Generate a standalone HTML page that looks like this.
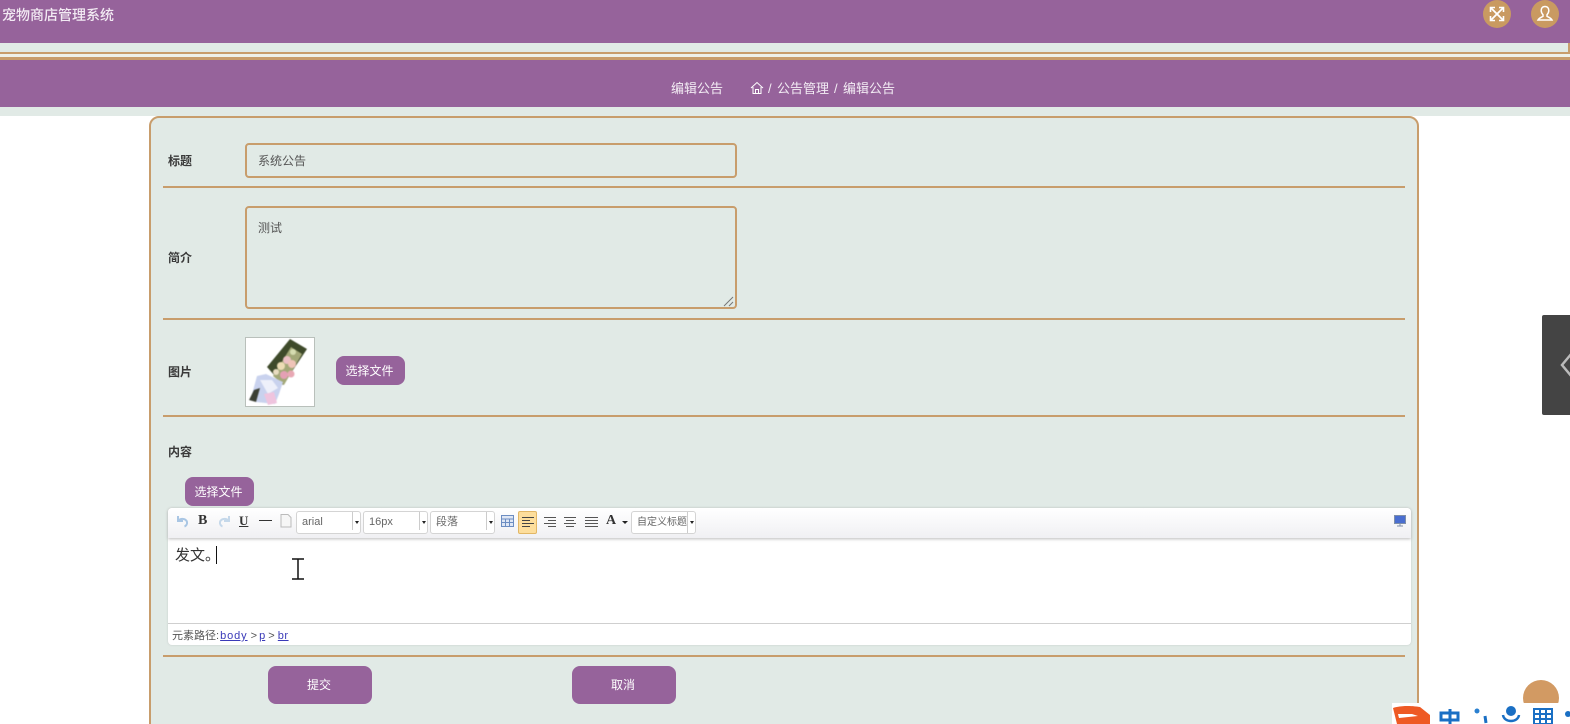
<!DOCTYPE html>
<html lang="zh-CN"><head><meta charset="utf-8"><title>宠物商店管理系统</title>
<style>
html,body{margin:0;padding:0;width:1570px;height:724px;overflow:hidden;background:#fff}
body{position:relative;font-family:"Liberation Sans","Noto Sans CJK SC",sans-serif;font-size:12px;color:#333}
.a{position:absolute;box-sizing:border-box;white-space:nowrap}
.p{background:#96639b}
.l{background:#c89d6c}
.lab{font-weight:bold;color:#3a3a3a;font-size:12px;line-height:16px;left:168px}
.in{border:2px solid #c89d6c;border-radius:4px;color:#555;font-size:12px;left:245px;width:492px}
.btn{background:#96639b;color:#fff;text-align:center;border-radius:8px}
.sel{background:#fff;border:1px solid #d4d4d4;border-radius:3px;height:23px;top:511px;font-size:11px;line-height:21px;color:#666;padding-left:5px;overflow:hidden}
.sel i{position:absolute;right:7px;top:0;bottom:3px;border-left:1px solid #ccc}
.sel b{position:absolute;right:1px;top:9px;border:2.500px solid transparent;border-top:3px solid #222;border-bottom:0}
.bc{top:80px;color:#f3ecf4;font-size:13px;line-height:18px}
svg{position:absolute;overflow:visible}
</style></head><body>
<div class="a p" style="left:0;top:0;width:1570px;height:43px"></div>
<div class="a" style="left:0;top:43px;width:1570px;height:9px;background:#e1eae6;border-right:2px solid #c89d6c"></div>
<div class="a l" style="left:0;top:52px;width:1570px;height:2px"></div>
<div class="a" style="left:0;top:54px;width:1570px;height:3px;background:#eef1ea"></div>
<div class="a l" style="left:0;top:57px;width:1570px;height:3px"></div>
<div class="a p" style="left:0;top:60px;width:1570px;height:47px"></div>
<div class="a" style="left:0;top:107px;width:1570px;height:9px;background:#e1eae6"></div>
<div class="a" style="left:2px;top:6px;color:#f2eaf3;font-size:14px;line-height:18px;font-weight:500">宠物商店管理系统</div>

<div class="a" style="left:1483px;top:0;width:28px;height:28px;border-radius:50%;background:#c99a61"></div>
<svg style="left:1483px;top:0" width="28" height="28" fill="none" stroke="#fff" stroke-width="1.800"><path d="M8 8L20 20M20 8L8 20"/><path d="M7.500 12V7.500H12M16 7.500H20.500V12M7.500 16V20.500H12M16 20.500H20.500V16" stroke-width="1.600"/></svg>
<div class="a" style="left:1531px;top:0;width:28px;height:28px;border-radius:50%;background:#c99a61"></div>
<svg style="left:1531px;top:0" width="28" height="28" fill="none" stroke="#fff" stroke-width="1.500"><path d="M14 6.500c-2.500 0-3.800 1.800-3.800 4 0 2 1 3.300 1.800 4.200v1.600c-1.500 1-3.800 1.500-5 3.700h14c-1.200-2.200-3.500-2.700-5-3.700v-1.600c.8-.9 1.800-2.200 1.800-4.200 0-2.200-1.300-4-3.800-4z"/></svg>

<div class="a bc" style="left:671px">编辑公告</div>
<svg style="left:750px;top:81px" width="14" height="14" fill="none" stroke="#fff" stroke-width="1"><path d="M1 7L7 1.500 13 7M3 6V12.500H11V6M5.500 12.500V8.500H8.500V12.500"/></svg>
<div class="a bc" style="left:768px">/</div>
<div class="a bc" style="left:777px">公告管理</div>
<div class="a bc" style="left:834px">/</div>
<div class="a bc" style="left:843px">编辑公告</div>

<div class="a" style="left:149px;top:116px;width:1270px;height:640px;background:#e1eae6;border:2px solid #c89d6c;border-radius:10px"></div>

<div class="a lab" style="top:153px">标题</div>
<div class="a in" style="top:143px;height:35px;line-height:32px;padding-left:11px">系统公告</div>
<div class="a l" style="left:163px;top:186px;width:1242px;height:2px"></div>

<div class="a lab" style="top:250px">简介</div>
<div class="a in" style="top:206px;height:103px;line-height:18px;padding:11px 0 0 11px">测试</div>
<svg style="left:722px;top:295px" width="12" height="12" stroke="#777" stroke-width="1"><path d="M2 11L11 2M7 11L11 7"/></svg>
<div class="a l" style="left:163px;top:318px;width:1242px;height:2px"></div>

<div class="a lab" style="top:364px">图片</div>
<div class="a" style="left:245px;top:337px;width:70px;height:70px;background:#fff;border:1px solid #b9c0bb;overflow:hidden">
<svg style="left:0;top:0;filter:blur(.5px)" width="68" height="68">
<path d="M21 29L44 1 61 11 37 47z" fill="#3e4a2a"/>
<path d="M27 38L45 9 56 16 38 47z" fill="#a3a878"/>
<circle cx="47" cy="14" r="3" fill="#d5dcb0"/><circle cx="41" cy="22" r="4" fill="#ecc0c4"/><circle cx="46" cy="26" r="4" fill="#efc4b8"/><circle cx="35" cy="28" r="4" fill="#ecdcb4"/><circle cx="38" cy="37" r="4" fill="#e4a0b4"/><circle cx="45" cy="36" r="3.500" fill="#e8a8b4"/><circle cx="30" cy="34" r="3" fill="#e8dcc0"/>
<path d="M11 38L20 36 37 44 33 56 29 66 10 64 5 60z" fill="#c9d2ee"/>
<path d="M14 42L26 42 32 50 22 56z" fill="#eef0fa"/>
<path d="M3 62L8 52 14 50 10 64z" fill="#3c4034"/>
<path d="M18 56L28 54 31 65 22 67z" fill="#efc4de"/>
</svg></div>
<div class="a btn" style="left:336px;top:356px;width:69px;height:29px;line-height:30px;font-size:12px;padding-right:2px">选择文件</div>
<div class="a l" style="left:163px;top:415px;width:1242px;height:2px"></div>

<div class="a lab" style="top:444px">内容</div>
<div class="a btn" style="left:185px;top:477px;width:69px;height:29px;line-height:30px;font-size:12px;padding-right:2px">选择文件</div>

<div class="a" style="left:168px;top:508px;width:1243px;height:137px;background:#fff;border-radius:4px;box-shadow:0 0 2px #c4cbc8"></div>
<div class="a" style="left:168px;top:508px;width:1243px;height:30px;background:linear-gradient(#fff,#f0f0f3);border-radius:4px 4px 0 0;box-shadow:0 1px 3px #bbb"></div>

<svg style="left:175px;top:514px" width="14" height="14" fill="none" stroke="#a9c6e4" stroke-width="2"><path d="M3 2V7H8M3.500 6.500C6 4 11 4.500 12 8 12.500 10 11 12 9.500 12.500"/></svg>
<div class="a" style="left:198px;top:513px;font:bold 14px/16px 'Liberation Serif',serif;color:#333">B</div>
<svg style="left:218px;top:514px" width="14" height="14" fill="none" stroke="#c5d8ea" stroke-width="2"><path d="M11 2V7H6M10.500 6.500C8 4 3 4.500 2 8 1.500 10 3 12 4.500 12.500"/></svg>
<div class="a" style="left:239px;top:513px;font:bold 13px/15px 'Liberation Serif',serif;color:#333;text-decoration:underline">U</div>
<div class="a" style="left:259px;top:520px;width:13px;height:1px;background:#333"></div>
<svg style="left:280px;top:514px" width="12" height="14" fill="#f6f6f6" stroke="#bbb"><path d="M1 .500H8L11 3.500V13H1z"/></svg>

<div class="a sel" style="left:296px;width:65px">arial<i></i><b></b></div>
<div class="a sel" style="left:363px;width:65px">16px<i></i><b></b></div>
<div class="a sel" style="left:430px;width:65px">段落<i></i><b></b></div>

<svg style="left:501px;top:515px" width="13" height="12" fill="#dfe7f5" stroke="#6c8dc2"><path d="M.500.500H12.500V11.500H.500zM.500 4H12.500M.500 7.500H12.500M4.500 4V11.500M8.500 4V11.500"/></svg>
<div class="a" style="left:518px;top:511px;width:19px;height:23px;background:#fdde9c;border:1px solid #e2b766;border-radius:2px"></div>
<svg style="left:522px;top:516px" width="12" height="12" stroke="#444"><path d="M0 1.500H12M0 4.500H8M0 7.500H12M0 10.500H8"/></svg>
<svg style="left:544px;top:516px" width="12" height="12" stroke="#555"><path d="M0 1.500H12M4 4.500H12M0 7.500H12M4 10.500H12"/></svg>
<svg style="left:564px;top:516px" width="12" height="12" stroke="#555"><path d="M0 1.500H12M2 4.500H10M0 7.500H12M2 10.500H10"/></svg>
<svg style="left:585px;top:516px" width="13" height="12" stroke="#555"><path d="M0 1.500H13M0 4.500H13M0 7.500H13M0 10.500H13"/></svg>
<div class="a" style="left:606px;top:513px;font:bold 14px/15px 'Liberation Serif',serif;color:#333">A</div>
<div class="a" style="left:622px;top:521px;border:3px solid transparent;border-top-color:#222;border-bottom:0"></div>
<div class="a sel" style="left:631px;width:65px;font-size:10px;padding-left:5px">自定义标题<i style="background:#fff;width:6px;right:1px;border-left:1px solid #ccc;bottom:0"></i><b></b></div>
<svg style="left:1394px;top:515px" width="12" height="12"><rect x=".500" y=".500" width="11" height="8" fill="#4a6ed0" stroke="#7f8fa8"/><path d="M3 11H9M6 9V11" stroke="#7f8fa8"/></svg>

<div class="a" style="left:175px;top:546px;font-size:15px;line-height:20px;color:#333">发文。</div>
<div class="a" style="left:216px;top:546px;width:1px;height:18px;background:#111"></div>
<svg style="left:292px;top:558px" width="12" height="22" fill="none" stroke="#111" stroke-width="1.500"><path d="M0 1H12M0 21H12M6 1V21"/></svg>

<div class="a" style="left:168px;top:623px;width:1243px;height:1px;background:#cfcfcf"></div>
<div class="a" style="left:172px;top:629px;font-size:11px;line-height:15px;color:#555">元素路径: <span style="color:#3a3ab8;text-decoration:underline;letter-spacing:.9px;margin-left:-2px">body</span> &gt; <span style="color:#3a3ab8;text-decoration:underline;margin-left:-1px">p</span> &gt; <span style="color:#3a3ab8;text-decoration:underline;letter-spacing:.5px">br</span></div>

<div class="a l" style="left:163px;top:655px;width:1242px;height:2px"></div>
<div class="a btn" style="left:268px;top:666px;width:104px;height:38px;line-height:38px;font-size:12px;padding-right:2px">提交</div>
<div class="a btn" style="left:572px;top:666px;width:104px;height:38px;line-height:38px;font-size:12px;padding-right:2px">取消</div>

<div class="a" style="left:1542px;top:315px;width:28px;height:100px;background:#444;border-radius:2px 0 0 2px"></div>
<svg style="left:1560px;top:352px" width="12" height="26" fill="none" stroke="#bbb" stroke-width="2.500"><path d="M12 1L2 13 12 25"/></svg>

<div class="a" style="left:1523px;top:680px;width:36px;height:36px;border-radius:50%;background:#d29a63"></div>
<div class="a" style="left:1392px;top:703px;width:178px;height:21px;background:#fff"></div>
<svg style="left:1390px;top:705px" width="180" height="19" fill="none">
<path d="M3 3C12 0 24 1 30 2L40 10 40 19H7z" fill="#ee5a24"/><path d="M8 9H22L28 11 9 13z" fill="#fff"/>
<path d="M60 4V19M51 8H68V15H51z" stroke="#1a6fc4" stroke-width="3"/>
<circle cx="87" cy="6" r="2.500" fill="#2a80d0"/><path d="M95 11L96 18" stroke="#1a6fc4" stroke-width="3"/>
<circle cx="121" cy="6" r="5" fill="#1a6fc4"/><path d="M113 10C114 18 128 18 129 10" stroke="#1a6fc4" stroke-width="2.500"/>
<path d="M144 4H162V19H144zM144 9H162M150 4V19M156 4V19M144 14H162" stroke="#1a6fc4" stroke-width="2"/>
<circle cx="178" cy="9" r="3" fill="#1a6fc4"/>
</svg>
</body></html>
